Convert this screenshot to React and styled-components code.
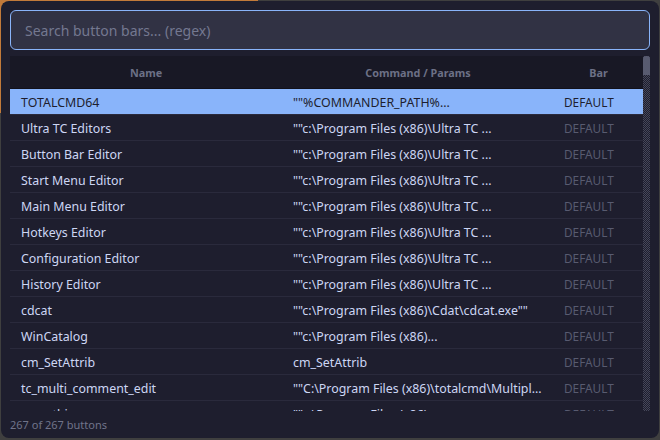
import React from 'react'
import styled, { createGlobalStyle } from 'styled-components'

const GlobalStyle = createGlobalStyle`
  html, body {
    margin: 0;
    padding: 0;
    width: 660px;
    height: 440px;
    overflow: hidden;
  }

  /* the app window that shows around the dialog's edges */
  body {
    background:
      linear-gradient(#c27a3a, #c27a3a) 0 0 / 258px 3px no-repeat,
      linear-gradient(#c27a3a, #c27a3a) 0 0 / 3px 113px no-repeat,
      #3f3f3f;
  }
`

const rows = [
  ['TOTALCMD64', '""%COMMANDER_PATH%...', 'DEFAULT'],
  ['Ultra TC Editors', '""c:\\Program Files (x86)\\Ultra TC ...', 'DEFAULT'],
  ['Button Bar Editor', '""c:\\Program Files (x86)\\Ultra TC ...', 'DEFAULT'],
  ['Start Menu Editor', '""c:\\Program Files (x86)\\Ultra TC ...', 'DEFAULT'],
  ['Main Menu Editor', '""c:\\Program Files (x86)\\Ultra TC ...', 'DEFAULT'],
  ['Hotkeys Editor', '""c:\\Program Files (x86)\\Ultra TC ...', 'DEFAULT'],
  ['Configuration Editor', '""c:\\Program Files (x86)\\Ultra TC ...', 'DEFAULT'],
  ['History Editor', '""c:\\Program Files (x86)\\Ultra TC ...', 'DEFAULT'],
  ['cdcat', '""c:\\Program Files (x86)\\Cdat\\cdcat.exe""', 'DEFAULT'],
  ['WinCatalog', '""c:\\Program Files (x86)...', 'DEFAULT'],
  ['cm_SetAttrib', 'cm_SetAttrib', 'DEFAULT'],
  ['tc_multi_comment_edit', '""C:\\Program Files (x86)\\totalcmd\\Multipl...', 'DEFAULT'],
  ['everything', '""c:\\Program Files (x86)...', 'DEFAULT'],
]

const Dialog = styled.div`
  box-sizing: border-box;
  width: 658px;
  height: 437px;
  margin: 1px 0 0 1px;
  padding: 9px 9px 0;
  display: flex;
  flex-direction: column;
  background: #1e1e2e;
  border-radius: 8px;
  font-family: "Noto Sans", "Open Sans", sans-serif;
`

const SearchInput = styled.input`
  box-sizing: border-box;
  flex: none;
  width: 640px;
  height: 40px;
  padding: 0 14px;
  border: 1px solid #89b4fa;
  border-radius: 6px;
  outline: none;
  background: #313244;
  color: #cdd6f4;
  font: 14px "Noto Sans", "Open Sans", sans-serif;

  &::placeholder {
    color: #747890;
    opacity: 1;
  }
`

const TableArea = styled.div`
  flex: none;
  height: 355px;
  margin-top: 6px;
  display: flex;
  overflow: hidden;
`

const Table = styled.div`
  flex: 1;
  min-width: 0;
`

const HeaderRow = styled.div`
  height: 33px;
  display: grid;
  grid-template-columns: 272px 272px 1fr;
  align-items: center;
  background: #181825;
  border-bottom: 1px solid #11111b;
  box-sizing: border-box;
`

const HeaderCell = styled.div`
  text-align: center;
  color: #6c7086;
  font-size: 10.8px;
  font-weight: 700;
`

const Row = styled.div`
  height: 26px;
  box-sizing: border-box;
  padding-top: 1px;
  display: grid;
  grid-template-columns: 272px 272px 1fr;
  align-items: center;
  border-bottom: 1px solid #2a2a3c;
  background: ${p => (p.$selected ? '#89b4fa' : 'transparent')};
  color: ${p => (p.$selected ? '#1e1e2e' : '#cdd6f4')};
  font-size: 12.4px;
`

const Cell = styled.div`
  padding: 0 11px;
  white-space: nowrap;
  overflow: hidden;
`

const BarCell = styled(Cell)`
  padding: 0 10px;
  font-size: 11.8px;
  color: ${p => (p.$selected ? '#1e1e2e' : '#585b70')};
`

const Scrollbar = styled.div`
  flex: none;
  width: 7px;
  background: repeating-conic-gradient(#45475a 0 25%, #1e1e2e 0 50%) 0 0 / 2px 2px;
`

const ScrollThumb = styled.div`
  height: 19px;
  background: #585b70;
  border-radius: 3px 3px 0 0;
`

const Footer = styled.div`
  padding-top: 6px;
  color: #70748a;
  font-size: 11px;
`

export default function App() {
  return (
    <>
      <GlobalStyle />
      <Dialog>
        <SearchInput placeholder="Search button bars... (regex)" />
        <TableArea>
          <Table>
            <HeaderRow>
              <HeaderCell>Name</HeaderCell>
              <HeaderCell>Command / Params</HeaderCell>
              <HeaderCell>Bar</HeaderCell>
            </HeaderRow>
            {rows.map((r, i) => (
              <Row key={i} $selected={i === 0}>
                <Cell>{r[0]}</Cell>
                <Cell>{r[1]}</Cell>
                <BarCell $selected={i === 0}>{r[2]}</BarCell>
              </Row>
            ))}
          </Table>
          <Scrollbar>
            <ScrollThumb />
          </Scrollbar>
        </TableArea>
        <Footer>267 of 267 buttons</Footer>
      </Dialog>
    </>
  )
}
